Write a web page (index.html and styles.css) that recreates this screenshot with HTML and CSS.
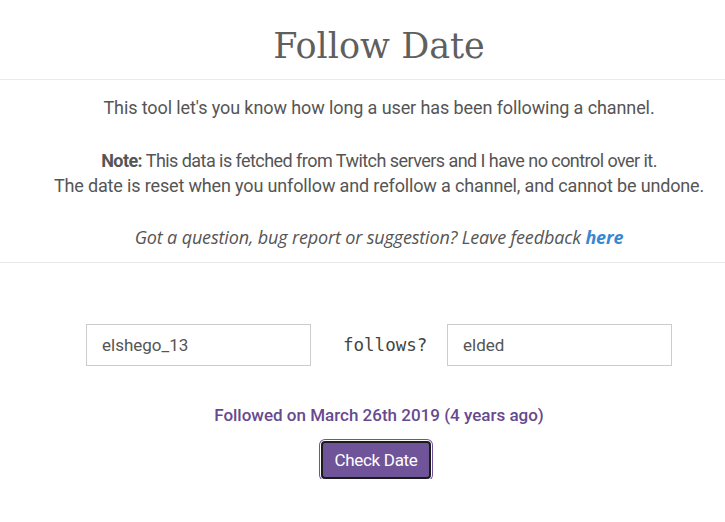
FILE: index.html
```html
<!DOCTYPE html>
<html>
<head>
<meta charset="utf-8">
<link rel="stylesheet" href="styles.css">
</head>
<body>
<header class="head"><h1 class="title">Follow Date</h1></header>
<section class="intro">
  <p class="line">This tool let's you know how long a user has been following a channel.</p>
  <p class="note"><span class="note1"><b>Note:</b> This data is fetched from Twitch servers and I have no control over it.</span><br>The date is reset when you unfollow and refollow a channel, and cannot be undone.</p>
  <p class="feedback">Got a question, bug report or suggestion? Leave feedback <a class="link" href="#">here</a></p>
</section>
<main class="form">
  <div class="row">
    <input class="field" type="text" value="elshego_13">
    <span class="follows">follows?</span>
    <input class="field" type="text" value="elded">
  </div>
  <p class="result">Followed on March 26th 2019 (4 years ago)</p>
  <button class="btn">Check Date</button>
</main>
</body>
</html>
```
FILE: styles.css
```css
html, body { margin: 0; padding: 0; background: #fff; }
body { font-family: "Roboto", "Liberation Sans", sans-serif; color: #555; font-size: 18px; }
.head { border-bottom: 1px solid #eaeaea; height: 79px; display: flex; justify-content: center; padding-left: 33px; }
.title { margin: 0; padding-top: 21px; font-family: "DejaVu Serif", serif; font-weight: normal; font-size: 35px; color: #5f5f5f; line-height: 50px; letter-spacing: 0px; }
.intro { border-bottom: 1px solid #eaeaea; text-align: center; padding: 16px 0 13px 33px; }
.intro p { margin: 0; }
.line { line-height: 24px; letter-spacing: -0.1px; }
.note { margin-top: 28px !important; line-height: 25px; letter-spacing: -0.15px; }
.note1 { letter-spacing: -0.55px; }
.note b { font-weight: bold; color: #555; }
.feedback { margin-top: 27px !important; font-family: "Open Sans", sans-serif; font-style: italic; font-size: 18px; line-height: 24px; letter-spacing: -0.15px; }
.link { color: #3a87d1; font-weight: bold; text-decoration: none; }
.form { display: flex; flex-direction: column; align-items: center; padding: 61px 0 0 33px; }
.row { display: flex; align-items: center; }
.field { width: 225px; height: 42px; box-sizing: border-box; border: 1px solid #ccc; border-radius: 0; padding: 0 15px; font-family: "Roboto", sans-serif; font-size: 17px; color: #555; outline: none; }
.follows { font-family: "DejaVu Sans Mono", monospace; font-size: 17.5px; color: #444; width: 136px; box-sizing: border-box; padding-left: 32px; text-align: left; }
.result { margin: 38px 0 0; color: #67498f; font-weight: 500; font-size: 17px; letter-spacing: 0px; line-height: 22px; }
.btn { margin: 15px 6px 0 0; background: #6f5499; color: #fff; font-family: "Roboto", sans-serif; font-size: 17px; border: 2px solid #1c1c1c; border-radius: 4px; width: 110px; height: 38px; box-shadow: 0 0 0 1px #fff, 0 0 0 2px #6f5499; letter-spacing: -0.3px; padding: 0; }
```
